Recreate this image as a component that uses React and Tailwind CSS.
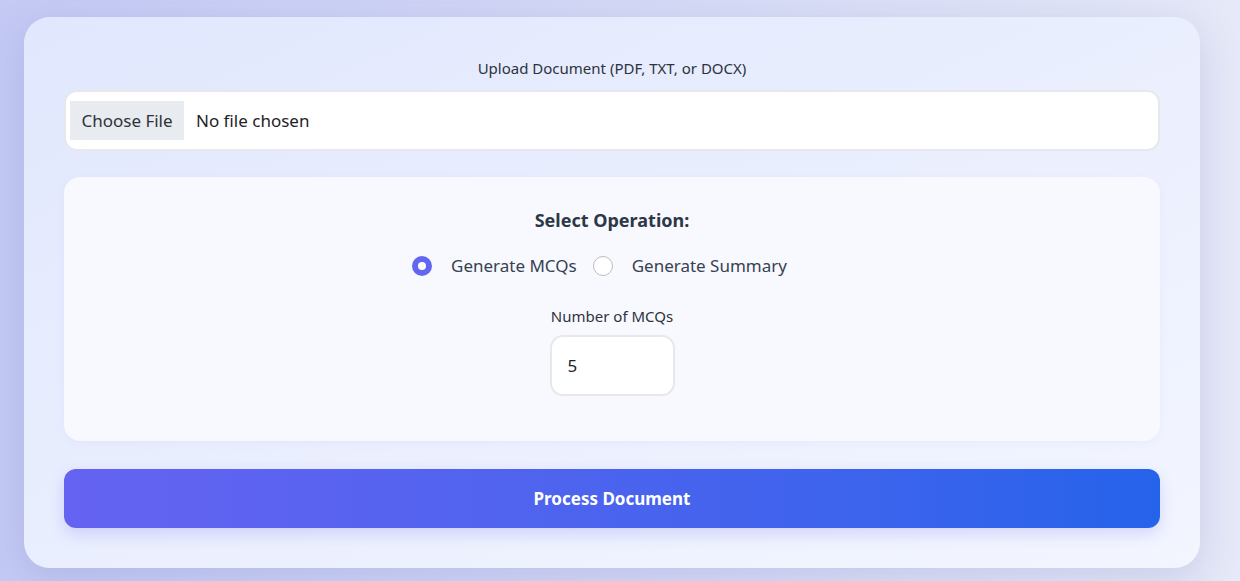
import React, { useState } from "react";

export default function App() {
    const [operation, setOperation] = useState("mcq");
    const [count, setCount] = useState(5);

    const font = { fontFamily: '"Noto Sans", "Open Sans", sans-serif' };

    return (
        <div
            className="w-[1240px] h-[581px] overflow-hidden bg-gradient-to-r from-[#c4caf4] to-[#e6e9f7] pt-[17px] pl-[24px]"
            style={font}
        >
            <div className="w-[1176px] h-[551px] rounded-[26px] bg-gradient-to-br from-[#e1e7fd] to-[#f3f6ff] shadow-[0_10px_40px_rgba(80,90,180,0.18)] px-[40px] pt-[40px]">
                {/* upload */}
                <div className="flex flex-col items-center">
                    <label className="text-[15px] leading-[22px] text-[#2d3340]">Upload Document (PDF, TXT, or DOCX)</label>
                    <div className="mt-[11px] w-full h-[61px] bg-white rounded-[13px] border-2 border-[#e6e8ec] flex items-center pl-[4px]">
                        <div className="h-[39px] w-[114px] bg-[#e8ebef] flex items-center justify-center text-[17px] text-[#2f3338]">
                            Choose File
                        </div>
                        <span className="ml-[12px] text-[17px] text-[#1f2226]">No file chosen</span>
                    </div>
                </div>

                {/* operation */}
                <div className="mt-[26px] h-[264px] rounded-[16px] bg-[#f8f9fe] shadow-[0_2px_10px_rgba(99,102,241,0.06)] flex flex-col items-center pt-[29px]">
                    <h3 className="text-[18px] leading-[28px] font-bold text-[#2d3748]">Select Operation:</h3>
                    <div className="mt-[20px] flex items-center h-[24px] text-[17px] text-[#374151]">
                        <button
                            onClick={() => setOperation("mcq")}
                            className="flex items-center"
                        >
                            <span className={`w-[20px] h-[20px] rounded-full flex items-center justify-center ${operation === "mcq" ? "bg-[#6366f1]" : "bg-white border border-[#bdbdbd]"}`}>
                                {operation === "mcq" && <span className="w-[8px] h-[8px] rounded-full bg-white" />}
                            </span>
                            <span className="ml-[19px]">Generate MCQs</span>
                        </button>
                        <button
                            onClick={() => setOperation("summary")}
                            className="flex items-center ml-[16px]"
                        >
                            <span className={`w-[20px] h-[20px] rounded-full flex items-center justify-center ${operation === "summary" ? "bg-[#6366f1]" : "bg-white border border-[#bdbdbd]"}`}>
                                {operation === "summary" && <span className="w-[8px] h-[8px] rounded-full bg-white" />}
                            </span>
                            <span className="ml-[19px] mr-[25px]">Generate Summary</span>
                        </button>
                    </div>
                    <label className="mt-[27px] text-[15px] leading-[22px] text-[#2d3340]">Number of MCQs</label>
                    <input
                        type="number"
                        value={count}
                        onChange={(e) => setCount(e.target.value)}
                        className="mt-[8px] w-[125px] h-[61px] rounded-[13px] border-2 border-[#e6e8ec] bg-white px-[16px] text-[17px] text-[#1f2226] outline-none"
                    />
                </div>

                {/* submit */}
                <button className="mt-[28px] w-full h-[59px] rounded-[12px] bg-gradient-to-r from-[#6563f1] to-[#2563eb] text-white text-[17px] font-bold shadow-[0_6px_16px_rgba(79,70,229,0.18)]">
                    Process Document
                </button>
            </div>
        </div>
    );
}
